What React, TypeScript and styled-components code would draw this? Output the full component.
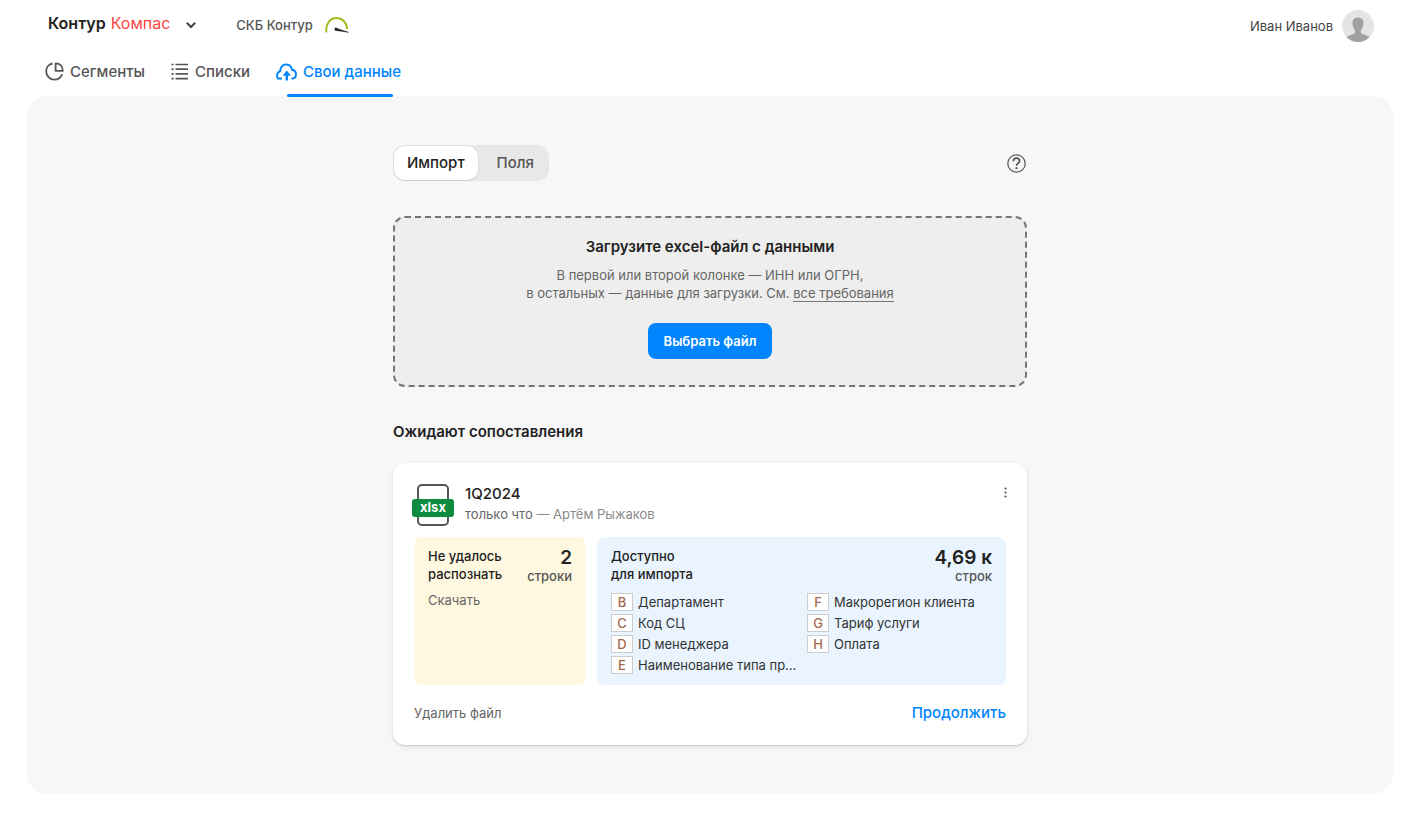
import React from 'react';
import styled, { createGlobalStyle, css } from 'styled-components';

const GlobalStyle = createGlobalStyle`
  *, *::before, *::after { box-sizing: border-box; }
  body {
    margin: 0;
    background: #fff;
    color: #222;
    font-family: Inter, "Noto Sans", sans-serif;
    font-size: 13px;
    line-height: 18px;
  }
  button { font: inherit; color: inherit; border: 0; padding: 0; background: none; cursor: pointer; }
  a { color: inherit; text-decoration: none; }
  h1, h2, h3, p, ul { margin: 0; padding: 0; font-size: inherit; font-weight: inherit; }
  ul { list-style: none; }
`;

const Page = styled.div`
  padding: 0 25px 23px 27px;
`;

const Header = styled.header`
  display: flex;
  align-items: center;
  height: 50px;
  padding: 0 19px 0 21px;
`;

const ProductButton = styled.button`
  display: flex;
  align-items: center;
  gap: 5px;
  font-size: 16px;
  line-height: 24px;
  margin-bottom: 4px;
`;

const Brand = styled.span`
  font-weight: 600;
`;

const Product = styled.span`
  color: #fa4640;
`;

const Chevron = styled.svg`
  margin: 3px 0 0 10px;
`;

const Organization = styled.div`
  display: flex;
  align-items: center;
  gap: 12px;
  margin-left: 39px;
  color: #555;
  font-weight: 500;
`;

const User = styled.button`
  display: flex;
  align-items: center;
  gap: 9px;
  margin: 2px 0 0 auto;
  color: #444;
`;

const Nav = styled.nav`
  display: flex;
  gap: 26px;
  height: 46px;
  padding-left: 18px;
`;

const NavLink = styled.a<{ $active?: boolean }>`
  position: relative;
  display: flex;
  align-items: center;
  gap: 6px;
  height: 43px;
  color: ${p => (p.$active ? '#0085ff' : '#555')};
  font-size: 15px;
  font-weight: 500;

  ${p => p.$active && css`
    &::after {
      content: '';
      position: absolute;
      left: 11px;
      right: 8px;
      bottom: -4px;
      height: 3px;
      border-radius: 2px;
      background: #0085ff;
    }
  `}
`;

const Panel = styled.main`
  padding: 49px 24px;
  border-radius: 20px;
  background: #f7f7f7;
`;

const Content = styled.div`
  max-width: 634px;
  margin: 0 auto;
`;

const TopRow = styled.div`
  display: flex;
  align-items: center;
  justify-content: space-between;
`;

const Switcher = styled.div`
  display: flex;
  border-radius: 12px;
  background: #e8e8e8;
`;

const SwitchButton = styled.button<{ $selected?: boolean }>`
  height: 36px;
  padding: 0 15px 0 18px;
  border-radius: 12px;
  color: #555;
  font-size: 15px;
  font-weight: 500;

  ${p => p.$selected && css`
    padding: 0 13px;
    border: 1px solid #dedede;
    border-bottom-color: #ccc;
    background: #fff;
    color: #222;
  `}
`;

const IconButton = styled.button`
  display: flex;
  color: #555;
`;

const HelpButton = styled(IconButton)`
  margin-right: 1px;
`;

const DropZone = styled.section`
  display: flex;
  flex-direction: column;
  align-items: center;
  margin-top: 35px;
  padding: 17px 20px 26px;
  border: 2px dashed #757575;
  border-radius: 12px;
  background: #eee;
  text-align: center;
`;

const Title = styled.h2`
  font-size: 15px;
  line-height: 24px;
  font-weight: 600;
`;

const Hint = styled.p`
  margin-top: 7px;
  color: #666;
`;

const HintLink = styled.a`
  border-bottom: 1px solid #777;
`;

const PrimaryButton = styled.button`
  height: 36px;
  margin-top: 21px;
  padding: 0 16px;
  border-radius: 8px;
  background: #0085ff;
  color: #fff;
  font-weight: 600;
`;

const SectionTitle = styled(Title)`
  margin-top: 33px;
`;

const Card = styled.article`
  margin-top: 19px;
  padding: 21px 21px 20px;
  border-radius: 12px;
  background: #fff;
  box-shadow: 0 1px 2px rgba(0, 0, 0, 0.18), 0 3px 8px rgba(0, 0, 0, 0.04);
`;

const FileHeader = styled.div`
  display: flex;
  align-items: flex-start;
  gap: 10px;
`;

const FileIcon = styled.div`
  display: flex;
  align-items: center;
  justify-content: center;
  width: 32px;
  height: 42px;
  margin: 0 6px 0 3px;
  border: 2px solid #555;
  border-radius: 5px;
`;

const FileType = styled.span`
  flex: none;
  width: 42px;
  height: 18px;
  margin-top: 6px;
  border-radius: 3px;
  background: #0d8b41;
  color: #fff;
  font-size: 13px;
  line-height: 16px;
  font-weight: 700;
  text-align: center;
`;

const FileInfo = styled.div`
  flex: 1;
`;

const FileName = styled.h3`
  font-size: 15px;
  line-height: 20px;
  font-weight: 500;
`;

const FileMeta = styled.p`
  line-height: 20px;
  color: #666;
`;

const Author = styled.span`
  color: #8a8a8a;
`;

const Summary = styled.div`
  display: grid;
  grid-template-columns: 172px 1fr;
  gap: 11px;
  margin-top: 11px;
`;

const Tile = styled.section<{ $tone: 'warning' | 'info' }>`
  min-width: 0;
  padding: 10px 14px 11px;
  border-radius: 8px;
  background: ${p => (p.$tone === 'warning' ? '#fff8e0' : '#e9f4ff')};
`;

const TileHeader = styled.div`
  display: flex;
  justify-content: space-between;
`;

const TileTitle = styled.h3`
  font-weight: 500;
`;

const Amount = styled.div`
  display: flex;
  flex-direction: column;
  color: #555;
  font-weight: 500;
  line-height: 16px;
  text-align: right;
`;

const Count = styled.strong`
  color: #222;
  font-size: 19px;
  line-height: 21px;
  font-weight: 600;
`;

const TextButton = styled.button`
  color: #666;
`;

const DownloadButton = styled(TextButton)`
  margin-top: 7px;
`;

const Columns = styled.div`
  display: grid;
  grid-template-columns: 186px 1fr;
  gap: 10px;
  margin-top: 9px;
`;

const FieldList = styled.ul`
  display: flex;
  flex-direction: column;
  gap: 3px;
  min-width: 0;
`;

const Field = styled.li`
  display: flex;
  gap: 5px;
  color: #333;
`;

const Letter = styled.span`
  flex: none;
  width: 22px;
  height: 18px;
  border: 1px solid #ccc;
  background: #fff;
  color: #a36a4c;
  line-height: 16px;
  font-weight: 500;
  text-align: center;
`;

const FieldName = styled.span`
  white-space: nowrap;
`;

const CardFooter = styled.div`
  display: flex;
  align-items: center;
  justify-content: space-between;
  margin-top: 16px;
  line-height: 24px;
`;

const ContinueButton = styled.button`
  color: #0085ff;
  font-size: 15px;
  font-weight: 500;
`;

const GaugeIcon = () => (
  <svg width="24" height="18" viewBox="0 0 24 18" fill="none" aria-hidden="true">
    <path d="M1.500 16.300C.2 8 5 2 11.500 2c5.800 0 10 4.200 10.700 10.800" stroke="#a0bd1c" strokeWidth="2" />
    <path d="M10.500 12 23.500 16.300 10.500 14.400Z" fill="#222" stroke="#222" strokeWidth=".5" />
    <circle cx="11" cy="13.100" r="1.500" fill="#222" />
  </svg>
);

const AvatarIcon = () => (
  <svg width="32" height="32" viewBox="0 0 32 32" aria-hidden="true">
    <circle cx="16" cy="16" r="16" fill="#e4e4e4" />
    <path d="M16 7.500c-3.700 0-5.700 2.300-5.500 6.200.2 3.100 1.100 4.900 2.600 6.300v2.600c0 1.700-5 2.200-8.500 4.600a16 16 0 0 0 22.800 0c-3.500-2.400-8.500-2.900-8.500-4.600V20c1.500-1.400 2.400-3.200 2.600-6.300.2-3.900-1.800-6.200-5.500-6.200Z" fill="#a0a0a0" />
  </svg>
);

const PieIcon = () => (
  <svg width="19" height="20" viewBox="0 0 19 20" fill="none" stroke="currentColor" strokeWidth="1.800" aria-hidden="true">
    <path d="M7.600 1.500C3.900 2.200 1.200 5.300 1.200 9.300c0 4.600 3.500 8.400 8 8.400 3.800 0 6.800-2.100 7.900-5.400" />
    <path d="M10.600 1.400V8.900h7.200C17.800 4.400 15 1.400 10.600 1.400Z" strokeLinejoin="round" />
  </svg>
);

const ListIcon = () => (
  <svg width="18" height="18" viewBox="0 0 18 18" stroke="currentColor" strokeWidth="1.700" aria-hidden="true">
    <path d="M.5 1.500h2.200M4.500 1.500H17M.5 6.200h2.200M4.500 6.200H17M.5 10.900h2.200M4.500 10.900H17M.5 15.600h2.200M4.500 15.600H17" />
  </svg>
);

const UploadIcon = () => (
  <svg width="21" height="18" viewBox="0 0 21 18" fill="none" stroke="currentColor" strokeWidth="1.900" aria-hidden="true">
    <path d="M6 15.500H1.800C.4 12 1.200 9.200 4.300 8 4.300 4 6.700 1.500 10 1.500c3.300 0 5.400 2 5.900 5.200 2.600.4 4.100 2 4.100 4.500 0 2.700-1.700 4.300-4.600 4.300" />
    <path d="M10.800 17.500V9" strokeWidth="2.400" />
    <path d="M6.600 12.700 10.800 7.400l4.200 5.300Z" fill="currentColor" stroke="none" />
  </svg>
);

const HelpIcon = () => (
  <svg width="19" height="19" viewBox="0 0 19 19" fill="none" stroke="currentColor" aria-hidden="true">
    <circle cx="9.500" cy="9.500" r="8.700" strokeWidth="1.200" />
    <path d="M6.400 7.300c0-1.900 1.300-3.100 3.100-3.100s3.100 1.100 3.100 2.700c0 2.200-3.100 2.200-3.100 4.800" strokeWidth="1.700" />
    <circle cx="9.500" cy="14.200" r="1.100" fill="currentColor" stroke="none" />
  </svg>
);

const MoreIcon = () => (
  <svg width="3" height="11" viewBox="0 0 3 11" fill="currentColor" aria-hidden="true">
    <circle cx="1.500" cy="1.500" r="1.100" />
    <circle cx="1.500" cy="5.500" r="1.100" />
    <circle cx="1.500" cy="9.500" r="1.100" />
  </svg>
);

const MoreButton = styled(IconButton)`
  padding: 3px 0;
  margin-right: -1px;
`;

const fieldGroups = [
  [['B', 'Департамент'], ['C', 'Код СЦ'], ['D', 'ID менеджера'], ['E', 'Наименование типа пр...']],
  [['F', 'Макрорегион клиента'], ['G', 'Тариф услуги'], ['H', 'Оплата']],
];

export default function App() {
  return (
    <>
      <GlobalStyle />
      <Page>
        <Header>
          <ProductButton>
            <Brand>Контур</Brand>
            <Product>Компас</Product>
            <Chevron width="12" height="8" viewBox="0 0 12 8" fill="none" stroke="#444" strokeWidth="2" aria-hidden="true">
              <path d="m1.800 1.800 4.200 4.200 4.200-4.200" />
            </Chevron>
          </ProductButton>
          <Organization>
            СКБ Контур
            <GaugeIcon />
          </Organization>
          <User>
            Иван Иванов
            <AvatarIcon />
          </User>
        </Header>
        <Nav>
          <NavLink href="#segments"><PieIcon />Сегменты</NavLink>
          <NavLink href="#lists"><ListIcon />Списки</NavLink>
          <NavLink href="#data" $active aria-current="page"><UploadIcon />Свои данные</NavLink>
        </Nav>
        <Panel>
          <Content>
            <TopRow>
              <Switcher>
                <SwitchButton $selected aria-pressed="true">Импорт</SwitchButton>
                <SwitchButton aria-pressed="false">Поля</SwitchButton>
              </Switcher>
              <HelpButton aria-label="Справка"><HelpIcon /></HelpButton>
            </TopRow>
            <DropZone>
              <Title>Загрузите excel-файл с данными</Title>
              <Hint>
                В первой или второй колонке — ИНН или ОГРН,
                <br />
                в остальных — данные для загрузки. См. <HintLink href="#requirements">все требования</HintLink>
              </Hint>
              <PrimaryButton>Выбрать файл</PrimaryButton>
            </DropZone>
            <SectionTitle>Ожидают сопоставления</SectionTitle>
            <Card>
              <FileHeader>
                <FileIcon><FileType>xlsx</FileType></FileIcon>
                <FileInfo>
                  <FileName>1Q2024</FileName>
                  <FileMeta>только что <Author>— Артём Рыжаков</Author></FileMeta>
                </FileInfo>
                <MoreButton aria-label="Действия с файлом"><MoreIcon /></MoreButton>
              </FileHeader>
              <Summary>
                <Tile $tone="warning">
                  <TileHeader>
                    <TileTitle>Не удалось<br />распознать</TileTitle>
                    <Amount><Count>2</Count>строки</Amount>
                  </TileHeader>
                  <DownloadButton>Скачать</DownloadButton>
                </Tile>
                <Tile $tone="info">
                  <TileHeader>
                    <TileTitle>Доступно<br />для импорта</TileTitle>
                    <Amount><Count>4,69 к</Count>строк</Amount>
                  </TileHeader>
                  <Columns>
                    {fieldGroups.map((group, i) => (
                      <FieldList key={i}>
                        {group.map(([letter, name]) => (
                          <Field key={letter}>
                            <Letter>{letter}</Letter>
                            <FieldName>{name}</FieldName>
                          </Field>
                        ))}
                      </FieldList>
                    ))}
                  </Columns>
                </Tile>
              </Summary>
              <CardFooter>
                <TextButton>Удалить файл</TextButton>
                <ContinueButton>Продолжить</ContinueButton>
              </CardFooter>
            </Card>
          </Content>
        </Panel>
      </Page>
    </>
  );
}
